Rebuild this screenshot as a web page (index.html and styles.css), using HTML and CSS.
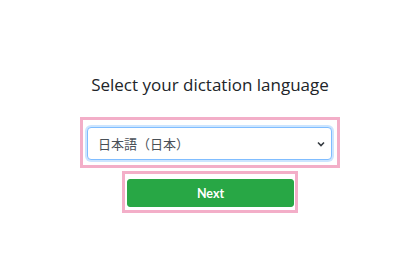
FILE: index.html
```html
<!DOCTYPE html>
<html lang="en">

<head>
    <meta charset="UTF-8">
    <meta name="viewport" content="width=device-width, initial-scale=1.0">
    <title>Dictation language</title>
    <link rel="stylesheet" href="styles.css">
</head>

<body>
    <div class="page">
        <h2 class="title">Select your dictation language</h2>

        <!-- language picker -->
        <div class="highlight lang-box">
            <div class="select-wrap">
                <select class="lang-select">
                    <option>日本語（日本）</option>
                    <option>English (United States)</option>
                </select>
                <svg class="chevron" width="8" height="6" viewBox="0 0 8 6">
                    <path d="M1 1.5 L4 4.5 L7 1.5" fill="none" stroke="#343a40" stroke-width="1.6" />
                </svg>
            </div>
        </div>

        <div class="highlight btn-box">
            <button class="next-btn">Next</button>
        </div>
    </div>
</body>

</html>
```

FILE: styles.css
```css
* {
    margin: 0;
    padding: 0;
    box-sizing: border-box;
}

body {
    background: #fff;
    font-family: 'Open Sans', sans-serif;
    color: #212529;
}

.page {
    display: flex;
    flex-direction: column;
    align-items: center;
    padding: 73px 0 0 20px;
}

.title {
    font-weight: 400;
    font-size: 17px;
    line-height: 24px;
    margin-bottom: 20px;
}

.highlight {
    border: 3px solid #f3aec8;
}

.lang-box {
    width: 260px;
    padding: 7px 5px 5px 4px;
}

.select-wrap {
    position: relative;
}

.lang-select {
    -webkit-appearance: none;
    appearance: none;
    display: block;
    width: 100%;
    height: 33px;
    padding: 0 28px 0 10px;
    border: 1px solid #80bdff;
    border-radius: 4px;
    box-shadow: 0 0 0 2px rgba(0, 123, 255, 0.2);
    background: #fff;
    color: #495057;
    font-family: 'Noto Sans CJK JP', 'Open Sans', sans-serif;
    font-size: 13px;
    outline: none;
}

.chevron {
    position: absolute;
    right: 7px;
    top: 14px;
    pointer-events: none;
}

.btn-box {
    width: 176px;
    margin-top: 3px;
    padding: 5px 1px 3px 2px;
}

.next-btn {
    display: block;
    width: 100%;
    height: 28px;
    background: #28a745;
    color: #fff;
    border: 1px solid #28a745;
    border-radius: 3px;
    font-family: Lato, sans-serif;
    font-weight: 700;
    font-size: 12.5px;
    cursor: pointer;
}

.next-btn:hover {
    background: #218838;
}
```
